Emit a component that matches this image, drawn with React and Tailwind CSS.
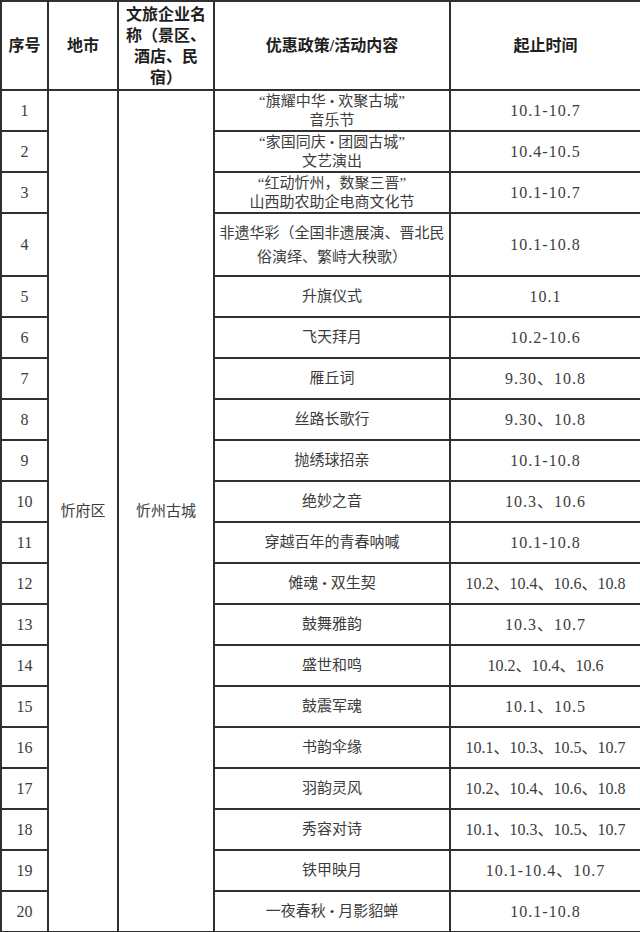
const rows = [
  { no: 1, act: ["“旗耀中华•欢聚古城”", "音乐节"], time: "10.1-10.7" },
  { no: 2, act: ["“家国同庆•团圆古城”", "文艺演出"], time: "10.4-10.5" },
  { no: 3, act: ["“红动忻州，数聚三晋”", "山西助农助企电商文化节"], time: "10.1-10.7" },
  { no: 4, act: ["非遗华彩（全国非遗展演、晋北民", "俗演绎、繁峙大秧歌）"], time: "10.1-10.8", tall: true },
  { no: 5, act: ["升旗仪式"], time: "10.1" },
  { no: 6, act: ["飞天拜月"], time: "10.2-10.6" },
  { no: 7, act: ["雁丘词"], time: "9.30、10.8" },
  { no: 8, act: ["丝路长歌行"], time: "9.30、10.8" },
  { no: 9, act: ["抛绣球招亲"], time: "10.1-10.8" },
  { no: 10, act: ["绝妙之音"], time: "10.3、10.6" },
  { no: 11, act: ["穿越百年的青春呐喊"], time: "10.1-10.8" },
  { no: 12, act: ["傩魂•双生契"], time: "10.2、10.4、10.6、10.8" },
  { no: 13, act: ["鼓舞雅韵"], time: "10.3、10.7" },
  { no: 14, act: ["盛世和鸣"], time: "10.2、10.4、10.6" },
  { no: 15, act: ["鼓震军魂"], time: "10.1、10.5" },
  { no: 16, act: ["书韵伞缘"], time: "10.1、10.3、10.5、10.7" },
  { no: 17, act: ["羽韵灵风"], time: "10.2、10.4、10.6、10.8" },
  { no: 18, act: ["秀容对诗"], time: "10.1、10.3、10.5、10.7" },
  { no: 19, act: ["铁甲映月"], time: "10.1-10.4、10.7" },
  { no: 20, act: ["一夜春秋•月影貂蝉"], time: "10.1-10.8" },
];

const cell = "border-2 border-[#303030] text-center align-middle p-0";

// the bullet sits in a full character slot, as in the printed table
function Line({ text }) {
  const parts = text.split("•");
  return (
    <div className="whitespace-nowrap">
      {parts.map((p, i) => (
        <span key={i}>
          {i > 0 && <span className="px-[4px] text-[13px]">•</span>}
          {p}
        </span>
      ))}
    </div>
  );
}

export default function App() {
  return (
    <div
      className="w-[640px] h-[932px] bg-white overflow-hidden"
      style={{ fontFamily: '"Liberation Serif", "Noto Sans CJK SC", serif' }}
    >
      <table className="w-[640px] table-fixed border-collapse text-[#3c3c3c]">
        <colgroup>
          <col className="w-[47px]" />
          <col className="w-[70px]" />
          <col className="w-[96px]" />
          <col className="w-[236px]" />
          <col className="w-[191px]" />
        </colgroup>
        <thead>
          <tr className="h-[89px] text-[16px] font-bold leading-[21px] text-[#1e1e1e]">
            <th className={cell}>序号</th>
            <th className={cell}>地市</th>
            <th className={cell}>
              <div className="px-[4px]">文旅企业名称（景区、酒店、民宿）</div>
            </th>
            <th className={cell}>优惠政策/活动内容</th>
            <th className={cell}>起止时间</th>
          </tr>
        </thead>
        <tbody className="text-[15px]">
          {rows.map((r, i) => {
            const long = r.time.split("、").length > 2;
            return (
              <tr key={r.no} className={r.tall ? "h-[63px]" : "h-[41px]"}>
                <td className={`${cell} text-[16px]`}>{r.no}</td>
                {i === 0 && (
                  <>
                    <td className={cell} rowSpan={20}>忻府区</td>
                    <td className={cell} rowSpan={20}>忻州古城</td>
                  </>
                )}
                <td className={`${cell} ${r.tall ? "leading-[24px]" : "leading-[19px]"}`}>
                  {r.act.map((line, k) => (
                    <Line key={k} text={line} />
                  ))}
                </td>
                <td
                  className={`${cell} text-[16px] whitespace-nowrap ${
                    long ? "tracking-[0px]" : "tracking-[1px]"
                  }`}
                >
                  {r.time}
                </td>
              </tr>
            );
          })}
        </tbody>
      </table>
    </div>
  );
}
